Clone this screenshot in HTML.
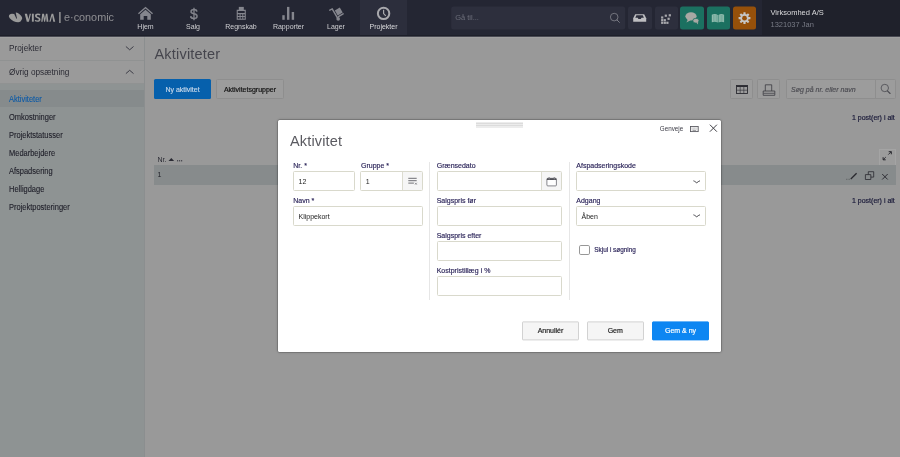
<!DOCTYPE html>
<html>
<head>
<meta charset="utf-8">
<title>Aktiviteter</title>
<style>
*{box-sizing:border-box;margin:0;padding:0}
html,body{width:900px;height:457px;overflow:hidden;background:#999;font-family:"Liberation Sans",sans-serif;font-size:7px;color:#1b1b2b}
body{position:relative}
#app{position:absolute;left:0;top:0;width:900px;height:457px;overflow:hidden;background:#999;will-change:transform}
.a{position:absolute;white-space:nowrap}
svg{position:absolute;overflow:visible}
/* ---------- top nav ---------- */
#nav{position:absolute;left:0;top:0;width:900px;height:36px;background:#242633}
#nav .edge{position:absolute;left:0;top:35px;width:900px;height:1px;background:#1d1f29}
#nav .right{position:absolute;left:762px;top:0;width:138px;height:36px;background:#1f212b}
.ni{position:absolute;top:0;height:36px;width:47px;color:#cfcfd2;font-size:7px}
.ni span{position:absolute;left:0;width:100%;top:22.5px;line-height:8px;text-align:center}
.ni.act{background:#2c2e3c}
#gsearch{position:absolute;left:451px;top:6px;width:174.200px;height:23.200px;background:#2d2f3d;border-radius:2.500px;color:#6c6e7a;font-size:7.500px;line-height:24.400px;padding-left:4px;transform:translate(.2px,.4px)}
.ib{position:absolute;top:6px;width:23.400px;height:23.200px;border-radius:2.500px;background:#2d2f3d;transform:translateY(.4px)}
/* ---------- sidebar ---------- */
#side{position:absolute;left:0;top:36px;width:144px;height:421px;background:#8e9393}
#sideedge{position:absolute;left:144px;top:36px;width:1px;height:421px;background:#8b8e8f}
.sh{position:absolute;left:0;width:144px;height:24px;line-height:26px;padding-left:9px;font-size:8.200px;color:#2b2b34;background:#9a9a9a;border-bottom:1px solid #909292}
.si{position:absolute;left:0;width:144px;height:17px;line-height:18px;-webkit-text-stroke:.12px currentColor;padding-left:9px;font-size:7.5px;color:#22222c}
.si.sel{background:#868b8c;color:#0c5aa6}
.sx2{display:inline-block;transform:scaleX(.885);transform-origin:0 50%;font-size:9.300px}
.sx{display:inline-block;transform:scaleX(.893);transform-origin:0 50%;font-size:8.400px}
/* ---------- main ---------- */
h1{position:absolute;left:154.500px;top:44.400px;font-size:14.500px;font-weight:normal;color:#45454d;line-height:20px;letter-spacing:.2px;white-space:nowrap}
.btn,.mb,.cnt{-webkit-text-stroke:.18px currentColor}
.btn{position:absolute;height:20px;line-height:21.600px;text-align:center;font-size:7px;border-radius:1.5px;white-space:nowrap}
.gb{background:#9c9c9c;border:1px solid #8e8e8e;color:#111}
.gb.btn{line-height:19.600px}
.cnt{position:absolute;font-size:7px;color:#191938;white-space:nowrap;line-height:8px}
/* ---------- modal ---------- */
#modal{position:absolute;left:278px;top:120px;width:442.5px;height:232px;background:#fff;border-radius:1.5px;box-shadow:0 0 0 .5px rgba(0,0,0,.2),0 0 2.500px rgba(0,0,0,.42)}
#modal h2{position:absolute;left:12px;top:11px;font-size:14.500px;font-weight:normal;color:#5a5a60;line-height:20px;letter-spacing:.15px;white-space:nowrap}
.lb{position:absolute;font-size:7px;line-height:8px;color:#2a2358;white-space:nowrap;-webkit-text-stroke:.15px #2a2358}
.in{position:absolute;height:20px;border:1px solid #d9d9cc;border-radius:1.500px;background:#fff;font-size:7px;line-height:19.600px;padding-left:4.500px;color:#222}
.vr{position:absolute;width:1px;background:#e6e6e6}
.mb{position:absolute;top:201px;height:19px;width:57px;line-height:18.200px;transform:translateY(.4px);text-align:center;font-size:7px;border-radius:1px;border:1px solid #d2d2d2;background:#f5f5f5;color:#222}
.mb.pri{background:#0d86f2;border-color:#0d86f2;color:#fff}
</style>
</head>
<body>
<div id="app">
<div id="nav">
  <div class="right"></div>
  <!-- logo -->
  <svg style="left:0;top:0" width="120" height="36" viewBox="0 0 120 36">
    <g fill="#9a9a9a">
      <ellipse cx="15.100" cy="18" rx="6.700" ry="3.500" transform="rotate(25 15.100 18)"/>
      <ellipse cx="18" cy="16.500" rx="4.800" ry="2.800" transform="rotate(42 18 16.500)"/>
    </g>
    <path d="M13.600 12.600l1.900-.9l1.500 6.800l-.6.200z" fill="#242633"/>
    <g fill="#9c9c9c">
      <path d="M24.700 13.700h2.300l1.400 5.600l1.300-5.600h1.300l-2.100 8h-2.100z"/>
      <rect x="31.900" y="13.700" width="1.900" height="8"/>
      <path d="M40 15.600c-.5-.4-1.200-.7-2-.7-.8 0-1.200.300-1.200.8 0 .5.400.8 1.400 1.200 1.500.6 2.300 1.300 2.300 2.500 0 1.500-1.200 2.400-3 2.400-1.100 0-2.100-.3-2.800-.8l.5-1.300c.6.400 1.400.7 2.200.7.800 0 1.300-.3 1.300-.9 0-.5-.4-.8-1.400-1.200-1.400-.5-2.300-1.300-2.300-2.500 0-1.400 1.100-2.300 2.900-2.300 1 0 1.900.2 2.500.6z"/>
      <path d="M41.200 21.700l1-8h1.800l.95 4.900l.95-4.900h1.500l1 8h-1.800l-.45-5.400l-1.050 5.400h-1l-.95-5.400l-.55 5.400z"/>
      <path d="M49.300 21.700l2.300-8h1.600l2 8h-1.900l-1.150-5.800l-1.550 5.800z"/>
      <rect x="59.200" y="12" width="1.400" height="11"/>
    </g>
    <text x="64" y="20.800" font-size="10.900" fill="#8e8e92" font-family="Liberation Sans, sans-serif" textLength="50" lengthAdjust="spacingAndGlyphs">e·conomic</text>
  </svg>
  <!-- nav items -->
  <div class="ni" style="left:122px"><svg style="left:0;top:0" width="47" height="36"><g fill="#85868e"><path d="M23.500 6.800l7.500 6.400-.9 1-6.600-5.600-6.600 5.600-.9-1z"/><path d="M23.500 9.800l5.300 4.500v5.500h-3.500v-3.900h-3.600v3.900h-3.500v-5.500z"/></g></svg><span>Hjem</span></div>
  <div class="ni" style="left:169.500px"><svg style="left:0;top:0" width="47" height="36"><text x="23.800" y="18.600" font-size="14" fill="#85868e" stroke="#85868e" stroke-width=".35" text-anchor="middle" font-family="Liberation Sans, sans-serif">$</text></svg><span>Salg</span></div>
  <div class="ni" style="left:217.500px"><svg style="left:0;top:0" width="47" height="36"><g fill="#85868e"><rect x="20.800" y="6.900" width="5" height="3.600"/><path d="M18.700 9.800h9.100v10h-9.100zM19.800 10.900v2.200h6.900v-2.200zM19.800 14.200v1.900h1.800v-1.900zM22.600 14.200v1.900h1.700v-1.900zM25.300 14.200v1.900h1.400v-1.900zM19.800 17v1.800h1.800v-1.800zM22.600 17v1.800h1.700v-1.800zM25.300 17v1.800h1.400v-1.800z" fill-rule="evenodd"/></g></svg><span>Regnskab</span></div>
  <div class="ni" style="left:265px"><svg style="left:0;top:0" width="47" height="36"><g fill="#85868e"><rect x="17.300" y="15.200" width="2.400" height="4.600"/><rect x="22" y="6.900" width="2.400" height="12.900"/><rect x="26.700" y="12" width="2.400" height="7.800"/></g></svg><span>Rapporter</span></div>
  <div class="ni" style="left:312.500px"><svg style="left:0;top:0" width="47" height="36"><g fill="none" stroke="#85868e" stroke-width="1.500" stroke-linecap="round"><path d="M16.800 10.200l2.400-1.300 5.400 9.300"/><path d="M25.400 16.600l4.700-2.700"/></g><g fill="#85868e"><circle cx="25.200" cy="18.900" r="1.800"/><path d="M21.800 10.500l5-2.900 2.900 5-5 2.900z"/></g></svg><span>Lager</span></div>
  <div class="ni act" style="left:360px;width:47px;color:#dcdcde"><svg style="left:0;top:0" width="47" height="36"><circle cx="23.600" cy="13.400" r="5.700" fill="none" stroke="#a9a9ad" stroke-width="2"/><path d="M23.600 9.800v3.800l2.200 2.300" fill="none" stroke="#a9a9ad" stroke-width="1.200"/></svg><span>Projekter</span></div>
  <!-- search -->
  <div id="gsearch">Gå til...</div>
  <svg style="left:606px;top:8px" width="18" height="18"><circle cx="8.200" cy="9.100" r="3.800" fill="none" stroke="#7a7c85" stroke-width=".9"/><path d="M10.900 11.900l2.500 2.500" stroke="#7a7c85" stroke-width="1" stroke-linecap="round"/></svg>
  <!-- icon buttons -->
  <div class="ib" style="left:628.300px"><svg style="left:0;top:0" width="23" height="23"><path d="M5.200 11.800l2-4h9l2 4v3.500h-13z" fill="#bebec1"/><path d="M7.300 11.300l1.100-2.500h6.400l1.100 2.500h-2.400l-.7 1.300h-2.400l-.7-1.300z" fill="#2d2f3d"/></svg></div>
  <div class="ib" style="left:654.600px"><svg style="left:-654.600px;top:-6.500px" width="900" height="36"><g fill="#a9a9ad"><rect x="661.100" y="16" width="2.200" height="2.200"/><rect x="661.100" y="18.700" width="2.200" height="2.200"/><rect x="661.100" y="21.300" width="2.200" height="2.200"/><rect x="663.700" y="18.700" width="2.200" height="2.200"/><rect x="663.700" y="21.300" width="2.200" height="2.200"/><rect x="666.300" y="21.300" width="2.200" height="2.200"/><rect x="664.700" y="14.200" width="2.200" height="2.200"/><rect x="667.500" y="17.300" width="2.200" height="2.200"/><rect x="668.700" y="13.800" width="2.200" height="2.200"/></g></svg></div>
  <div class="ib" style="left:680.300px;background:#1b7060"><svg style="left:0;top:0" width="23" height="23"><g fill="#a8a8a3"><ellipse cx="11" cy="9.900" rx="5.600" ry="4.100"/><path d="M8 12.800l-1.600 3.300 4.200-2.300z"/><ellipse cx="15.900" cy="14.300" rx="3.100" ry="2.400" stroke="#1b7060" stroke-width=".8"/><path d="M16.100 16.100l2 2-0.200-2.600z"/></g></svg></div>
  <div class="ib" style="left:706.900px;background:#1b7060"><svg style="left:0;top:0" width="23" height="23"><g transform="translate(-.1 .9)"><g fill="#93bdb0"><path d="M4.900 7.400c2-1 4-1 6 .2v7.600c-2-1-4-1-6-.2z"/><path d="M17.200 7.400c-2-1-3.600-1-5.600 .2v7.600c2-1 3.600-1 5.600-.2z"/></g><g stroke="#1b7060" stroke-width=".5" opacity=".5"><path d="M6.500 7.600v6.800M8 7.400v6.800M9.500 7.600v6.800M13.100 7.600v6.800M14.500 7.400v6.800M15.900 7.600v6.800"/></g></g></svg></div>
  <div class="ib" style="left:732.800px;background:#96500a"><svg style="left:0;top:0" width="23" height="23"><g transform="translate(11.500 11.800)"><g fill="#c6c6c6"><circle r="4.100"/><g id="t"><rect x="-1.100" y="-5.900" width="2.200" height="11.800" rx=".3"/></g><use href="#t" transform="rotate(45)"/><use href="#t" transform="rotate(90)"/><use href="#t" transform="rotate(135)"/></g><circle r="2.400" fill="#96500a"/></g></svg></div>
  <div class="a" style="left:770.500px;top:8px;font-size:7.500px;line-height:9px;color:#dadadc">Virksomhed A/S</div>
  <div class="a" style="left:770.500px;top:20px;font-size:7.500px;line-height:9px;color:#787b86">1321037 Jan</div>
  <div class="edge"></div>
  <div class="a" style="left:0;top:36px;width:900px;height:1px;background:rgba(34,36,48,.68);z-index:5"></div>
  <div class="a" style="left:0;top:37px;width:900px;height:1px;background:rgba(255,255,255,.07);z-index:5"></div>
</div>
<div id="side">
  <div class="sh" style="top:0;height:25px;line-height:24.800px"><span class="sx2">Projekter</span></div>
  <div class="sh" style="top:25px;height:23px;line-height:22.400px"><span class="sx2">Øvrig opsætning</span></div>
  <svg style="left:124.900px;top:8.500px" width="10" height="8"><path d="M.9 1.500l3.800 3.300 3.800-3.300" fill="none" stroke="#383842" stroke-width=".95"/></svg>
  <svg style="left:124.900px;top:31.600px" width="10" height="8"><path d="M.9 5.600l3.800-3.300 3.800 3.300" fill="none" stroke="#383842" stroke-width=".95"/></svg>
  <div class="si sel" style="top:53.500px"><span class="sx">Aktiviteter</span></div>
  <div class="si" style="top:71.500px"><span class="sx">Omkostninger</span></div>
  <div class="si" style="top:89.500px"><span class="sx">Projektstatusser</span></div>
  <div class="si" style="top:107.500px"><span class="sx">Medarbejdere</span></div>
  <div class="si" style="top:125.500px"><span class="sx">Afspadsering</span></div>
  <div class="si" style="top:143.500px"><span class="sx">Helligdage</span></div>
  <div class="si" style="top:161.500px"><span class="sx">Projektposteringer</span></div>
</div>
<div id="sideedge"></div>
<h1>Aktiviteter</h1>
<div class="btn" style="left:154px;top:79px;width:57px;background:#0660ac;color:#c3d6ea">Ny aktivitet</div>
<div class="btn gb" style="left:216px;top:79px;width:68px">Aktivitetsgrupper</div>
<div class="btn gb" style="left:730px;top:79px;width:23px"><svg style="left:4.500px;top:4.500px" width="12" height="10"><rect x=".5" y=".5" width="11" height="8" fill="none" stroke="#2c2c32" stroke-width=".9"/><rect x=".5" y=".5" width="11" height="1.500" fill="#2c2c32"/><path d="M.5 5.200h11M4.200 2v6.500M7.800 2v6.500" stroke="#2c2c32" stroke-width=".6"/></svg></div>
<div class="btn gb" style="left:757px;top:79px;width:23px"><svg style="left:3.800px;top:3.500px" width="14" height="12"><path d="M3.300 7v-6.200h6.400v6.200" fill="none" stroke="#3a3a40" stroke-width=".8"/><path d="M1.200 7h11.600v4.300h-11.600z" fill="none" stroke="#3a3a40" stroke-width=".8"/><path d="M1.500 9.300h11" stroke="#3a3a40" stroke-width=".7"/></svg></div>
<div class="btn gb" style="left:786px;top:79px;width:110px;text-align:left;padding-left:4px;font-style:italic;color:#4e4e54">Søg på nr. eller navn</div>
<div class="a" style="left:875px;top:80px;width:1px;height:18px;background:#8e8e8e"></div>
<svg style="left:879px;top:82px" width="14" height="14"><circle cx="5.800" cy="6" r="3.700" fill="none" stroke="#4a4a50" stroke-width=".8"/><path d="M8.400 8.800l2.700 2.700" stroke="#4a4a50" stroke-width="1.100" stroke-linecap="round"/></svg>
<div class="cnt" style="left:852px;top:113.500px">1 post(er) i alt</div>
<div class="cnt" style="left:852px;top:197px">1 post(er) i alt</div>
<!-- table -->
<div class="a" style="left:157.500px;top:155.500px;font-size:7px;line-height:8px;color:#2a2a33">Nr.</div>
<svg style="left:168px;top:156px" width="18" height="8"><path d="M.5 5l2.800-3 2.800 3z" fill="#2a2a33"/><rect x="9" y="4.300" width="1.200" height="1" fill="#2a2a33"/><rect x="11" y="4.300" width="1.200" height="1" fill="#2a2a33"/><rect x="13" y="4.300" width="1.200" height="1" fill="#2a2a33"/></svg>
<div class="a" style="left:878.500px;top:148.500px;width:17px;height:17px;background:#9c9c9c;border:1px solid #a4a4a4"></div>
<svg style="left:880px;top:150px" width="14" height="14"><g stroke="#26262c" stroke-width=".9" fill="none"><path d="M3.200 9.700l2.600-2.600M8.300 4.600l2.900-2.900"/><path d="M3.100 7.200v2.600h2.600M11.300 4.300v-2.600h-2.600" stroke-width="1"/></g></svg>
<div class="a" style="left:154px;top:165px;width:741.500px;height:19.500px;background:#878b8c"></div>
<div class="a" style="left:157.500px;top:171px;font-size:7px;line-height:8px;color:#1e1e26">1</div>
<svg style="left:844px;top:170px" width="48" height="12"><g stroke="#2a2a30" fill="none"><path d="M6.800 9l5.800-5.800" stroke-width="1.300"/><path d="M2 9.300h.9M3.600 9.300h.9M5.200 9.300h.9" stroke-width=".8" stroke="#55595b"/><path d="M21.400 4.600v4.900h5.400v-4.900z" stroke-width=".8"/><path d="M24.300 4.400v-2.700h5.400v5.400h-2.700" stroke-width=".8"/><path d="M38.200 4l5.500 5.500M43.700 4l-5.500 5.500" stroke-width=".95"/></g></svg>
<div id="modal">
  <div class="a" style="left:198px;top:1.500px;width:47px;height:6px;background:#ececec"></div>
  <div class="a" style="left:198px;top:3px;width:47px;height:1px;background:#dcdcdc"></div>
  <div class="a" style="left:198px;top:5.200px;width:47px;height:1px;background:#dcdcdc"></div>
  <h2>Aktivitet</h2>
  <div class="a" style="left:381.800px;top:4.500px;font-size:6.300px;line-height:8px;color:#3a3a44">Genveje</div>
  <svg style="left:411.500px;top:5.900px" width="10" height="7"><rect x=".5" y=".5" width="7.700" height="5.100" fill="#f2f2f2" stroke="#55555c" stroke-width=".85"/><path d="M1.600 2.100h5.600M1.800 3.300h5.200" stroke="#9a9aa0" stroke-width=".6" stroke-dasharray=".8 .5"/><path d="M2.600 4.500h3.400" stroke="#707076" stroke-width=".6"/></svg>
  <svg style="left:430.700px;top:3.900px" width="9" height="9"><path d="M.9.700l7 7M7.900.7l-7 7" stroke="#404046" stroke-width="1"/></svg>

  <div class="lb" style="left:15.300px;top:41.500px">Nr. *</div>
  <div class="in" style="left:15px;top:51px;width:62px">12</div>
  <div class="lb" style="left:83px;top:41.500px">Gruppe *</div>
  <div class="in" style="left:82.300px;top:51px;width:62.500px">1</div>
  <div class="a" style="left:124px;top:52px;width:19.800px;height:18px;background:#f6f6f6;border-left:1px solid #dcdcd0"></div>
  <svg style="left:129.500px;top:56.500px" width="10" height="9"><path d="M.3 1.300h8.400M.3 3.700h8.400M.3 6.100h5.600" stroke="#55555c" stroke-width=".85"/><path d="M7 5.800l1.800 1.800M8.800 5.800l-1.800 1.800" stroke="#55555c" stroke-width=".6"/></svg>
  <div class="lb" style="left:15.300px;top:76.800px">Navn *</div>
  <div class="in" style="left:15px;top:86px;width:129.800px">Klippekort</div>

  <div class="vr" style="left:151px;top:41.500px;height:138.500px"></div>
  <div class="lb" style="left:158.700px;top:41.500px">Grænsedato</div>
  <div class="in" style="left:158.700px;top:51px;width:125.300px"></div>
  <div class="a" style="left:263.300px;top:52px;width:19.700px;height:18px;background:#f6f6f6;border-left:1px solid #dcdcd0"></div>
  <svg style="left:268px;top:56.500px" width="12" height="10"><rect x=".9" y="1.300" width="9.500" height="7.600" rx=".9" fill="#fff" stroke="#55555c" stroke-width=".7"/><path d="M.9 3.100v-1a.9.900 0 0 1 .9-.9h7.700a.9.900 0 0 1 .9.900v1z" fill="#4e4e55"/><rect x="2.600" y=".3" width="1" height="1.300" fill="#4e4e55"/><rect x="7.700" y=".3" width="1" height="1.300" fill="#4e4e55"/><rect x="2.700" y="1.500" width=".8" height=".8" fill="#ddd"/><rect x="7.800" y="1.500" width=".8" height=".8" fill="#ddd"/></svg>
  <div class="lb" style="left:158.700px;top:76.800px">Salgspris før</div>
  <div class="in" style="left:158.700px;top:86px;width:125.300px"></div>
  <div class="lb" style="left:158.700px;top:111px;transform:translateY(.5px)">Salgspris efter</div>
  <div class="in" style="left:158.700px;top:121px;width:125.300px"></div>
  <div class="lb" style="left:158.700px;top:146px;transform:translateY(.5px)">Kostpristillæg i %</div>
  <div class="in" style="left:158.700px;top:156px;width:125.300px"></div>

  <div class="vr" style="left:290.800px;top:41.500px;height:138.500px"></div>
  <div class="lb" style="left:298.300px;top:41.500px">Afspadseringskode</div>
  <div class="in" style="left:298px;top:51px;width:130px"></div>
  <svg style="left:414.500px;top:58.500px" width="8" height="6"><path d="M.8 1.800q.3 0 2.900 2 2.600-2 2.900-2" fill="none" stroke="#3a3a40" stroke-width=".9" stroke-linecap="round"/></svg>
  <div class="lb" style="left:298.300px;top:76.800px">Adgang</div>
  <div class="in" style="left:298px;top:86px;width:130px">Åben</div>
  <svg style="left:414.500px;top:93.300px" width="8" height="6"><path d="M.8 1.800q.3 0 2.900 2 2.600-2 2.900-2" fill="none" stroke="#3a3a40" stroke-width=".9" stroke-linecap="round"/></svg>
  <div class="a" style="left:301px;top:124.500px;width:11px;height:10.500px;border:1px solid #979797;border-radius:1.800px;background:#fff"></div>
  <div class="lb" style="left:316.300px;top:125.500px;font-size:6.400px">Skjul i søgning</div>

  <div class="mb" style="left:244px">Annullér</div>
  <div class="mb" style="left:308.500px;width:57.500px">Gem</div>
  <div class="mb pri" style="left:374px">Gem &amp; ny</div>
</div>
</div>
</body>
</html>
